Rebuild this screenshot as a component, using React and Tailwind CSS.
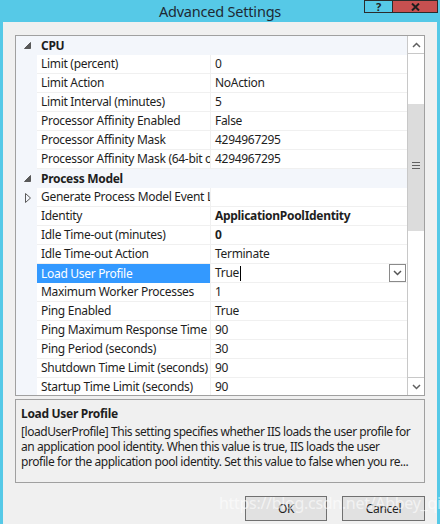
const rows = [
  { cat: 'CPU' },
  { name: 'Limit (percent)', value: '0' },
  { name: 'Limit Action', value: 'NoAction' },
  { name: 'Limit Interval (minutes)', value: '5' },
  { name: 'Processor Affinity Enabled', value: 'False' },
  { name: 'Processor Affinity Mask', value: '4294967295' },
  { name: 'Processor Affinity Mask (64-bit option)', value: '4294967295' },
  { cat: 'Process Model' },
  { name: 'Generate Process Model Event Log Entry', value: '', collapsed: true },
  { name: 'Identity', value: 'ApplicationPoolIdentity', bold: true },
  { name: 'Idle Time-out (minutes)', value: '0', bold: true },
  { name: 'Idle Time-out Action', value: 'Terminate' },
  { name: 'Load User Profile', value: 'True', selected: true },
  { name: 'Maximum Worker Processes', value: '1' },
  { name: 'Ping Enabled', value: 'True' },
  { name: 'Ping Maximum Response Time (seconds)', value: '90' },
  { name: 'Ping Period (seconds)', value: '30' },
  { name: 'Shutdown Time Limit (seconds)', value: '90' },
  { name: 'Startup Time Limit (seconds)', value: '90' },
]

function Expanded() {
  return (
    <svg width="7" height="7" viewBox="0 0 7 7">
      <path d="M6.5 0.5 L6.5 6.5 L0.5 6.5 Z" fill="#595959" stroke="#595959" strokeWidth="1" />
    </svg>
  )
}

function Collapsed() {
  return (
    <svg width="6" height="10" viewBox="0 0 6 10">
      <path d="M0.5 0.5 L5.5 5 L0.5 9.5 Z" fill="none" stroke="#595959" strokeWidth="1" />
    </svg>
  )
}

function Row({ r }) {
  if (r.cat) {
    return (
      <div className="flex h-[19px] shrink-0 items-center bg-[#f3f6fb]">
        <div className="flex w-[21px] shrink-0 items-center justify-center pl-[2px]">
          <Expanded />
        </div>
        <div className="pl-[4px] font-bold text-[#1e1e1e]">{r.cat}</div>
      </div>
    )
  }
  return (
    <div className="flex h-[19px] shrink-0">
      <div className="flex w-[21px] shrink-0 items-center justify-center bg-[#f3f6fb] pl-[2px]">
        {r.collapsed && <Collapsed />}
      </div>
      <div
        className={
          r.selected
            ? 'flex w-[174px] shrink-0 items-center overflow-hidden whitespace-nowrap border-r border-[#f0f0f0] bg-[#3399ff] pl-[4px] text-white'
            : 'flex w-[174px] shrink-0 items-center overflow-hidden whitespace-nowrap border-b border-r border-[#f0f0f0] bg-white pl-[4px] text-[#1e1e1e]'
        }
      >
        {r.name}
      </div>
      <div
        className={
          r.bold
            ? 'flex flex-1 items-center border-b border-[#f0f0f0] bg-white pl-[4px] font-bold text-[#1e1e1e]'
            : 'flex flex-1 items-center border-b border-[#f0f0f0] bg-white pl-[4px] text-[#1e1e1e]'
        }
      >
        {r.selected ? (
          <div className="flex flex-1 items-center">
            <span>{r.value}</span>
            <span className="ml-[1px] h-[15px] w-[1px] bg-black" />
            <div className="ml-auto mr-[1px] flex h-[18px] w-[17px] items-center justify-center border border-[#8a8a8a] bg-white">
              <svg width="9" height="6" viewBox="0 0 9 6">
                <path d="M1 1 L4.5 4.5 L8 1" fill="none" stroke="#555" strokeWidth="1.5" />
              </svg>
            </div>
          </div>
        ) : (
          r.value
        )}
      </div>
    </div>
  )
}

export default function App() {
  return (
    <div
      className="relative flex h-[524px] w-[440px] flex-col overflow-hidden bg-[#56c9e7] text-[12px] leading-none tracking-[-0.3px]"
      style={{ fontFamily: '"Noto Sans", "Segoe UI", sans-serif' }}
    >
      {/* title bar */}
      <div className="relative flex h-[22px] shrink-0 items-center justify-center">
        <span className="text-[14.5px] tracking-[-0.2px] text-[#1e2a33]">Advanced Settings</span>
        <div className="absolute right-[2px] top-0 flex">
          <div className="flex h-[13px] w-[28px] items-center justify-center border border-r-0 border-[#2b2b2b] text-[11px] font-bold text-[#1e1e1e]">
            ?
          </div>
          <div className="flex h-[13px] w-[46px] items-center justify-center border border-[#2b2b2b] bg-[#c75050]">
            <svg width="9" height="8" viewBox="0 0 9 8">
              <path d="M1 0.5 L8 7.5 M8 0.5 L1 7.5" stroke="#1e1e1e" strokeWidth="2" />
            </svg>
          </div>
        </div>
      </div>

      {/* body */}
      <div className="mx-[3px] flex flex-1 flex-col bg-[#f0f0f0] pl-[12px] pr-[12px] pt-[13px]">
        {/* property grid */}
        <div className="flex h-[361px] w-[410px] shrink-0 border border-[#a0a0a0] bg-white">
          <div className="flex flex-1 flex-col overflow-hidden">
            {rows.map((r, i) => (
              <Row key={i} r={r} />
            ))}
          </div>
          <div className="flex w-[17px] shrink-0 flex-col border-l border-[#c8c8c8] bg-white">
            <div className="flex h-[18px] items-center justify-center border-b border-[#c8c8c8]">
              <svg width="9" height="6" viewBox="0 0 9 6">
                <path d="M1 5 L4.5 1.5 L8 5" fill="none" stroke="#606060" strokeWidth="1.5" />
              </svg>
            </div>
            <div className="h-[50px]" />
            <div className="flex h-[127px] items-end justify-center bg-[#dcdcdc] pb-[62px]">
              <svg width="8" height="7" viewBox="0 0 8 7">
                <path d="M0 0.5 H8 M0 3.5 H8 M0 6.5 H8" stroke="#606060" strokeWidth="1" />
              </svg>
            </div>
            <div className="flex-1" />
            <div className="flex h-[18px] items-center justify-center border-t border-[#c8c8c8]">
              <svg width="9" height="6" viewBox="0 0 9 6">
                <path d="M1 1 L4.5 4.5 L8 1" fill="none" stroke="#606060" strokeWidth="1.5" />
              </svg>
            </div>
          </div>
        </div>

        {/* description */}
        <div className="mt-[3px] flex h-[84px] w-[410px] shrink-0 flex-col overflow-hidden whitespace-nowrap border border-[#a0a0a0] px-[5px] pt-[8px] text-[#1e1e1e]">
          <div className="font-bold">Load User Profile</div>
          <p className="mt-[4px] leading-[15px] tracking-[-0.45px]">
            [loadUserProfile] This setting specifies whether IIS loads the user profile for
            <br />
            an application pool identity. When this value is true, IIS loads the user
            <br />
            profile for the application pool identity. Set this value to false when you re...
          </p>
        </div>

        {/* buttons */}
        <div className="mt-[13px] flex justify-end gap-[15px]">
          <button className="h-[25px] w-[82px] border border-[#707070] bg-[#e1e1e1] text-[12px] text-[#1e1e1e]">
            OK
          </button>
          <button className="h-[25px] w-[83px] border border-[#707070] bg-[#e1e1e1] text-[12px] text-[#1e1e1e]">
            Cancel
          </button>
        </div>
      </div>

      <div className="pointer-events-none absolute left-[219px] top-[495px] text-[16px] text-white/60">
        https://blog.csdn.net/Abbey_qi
      </div>
    </div>
  )
}
